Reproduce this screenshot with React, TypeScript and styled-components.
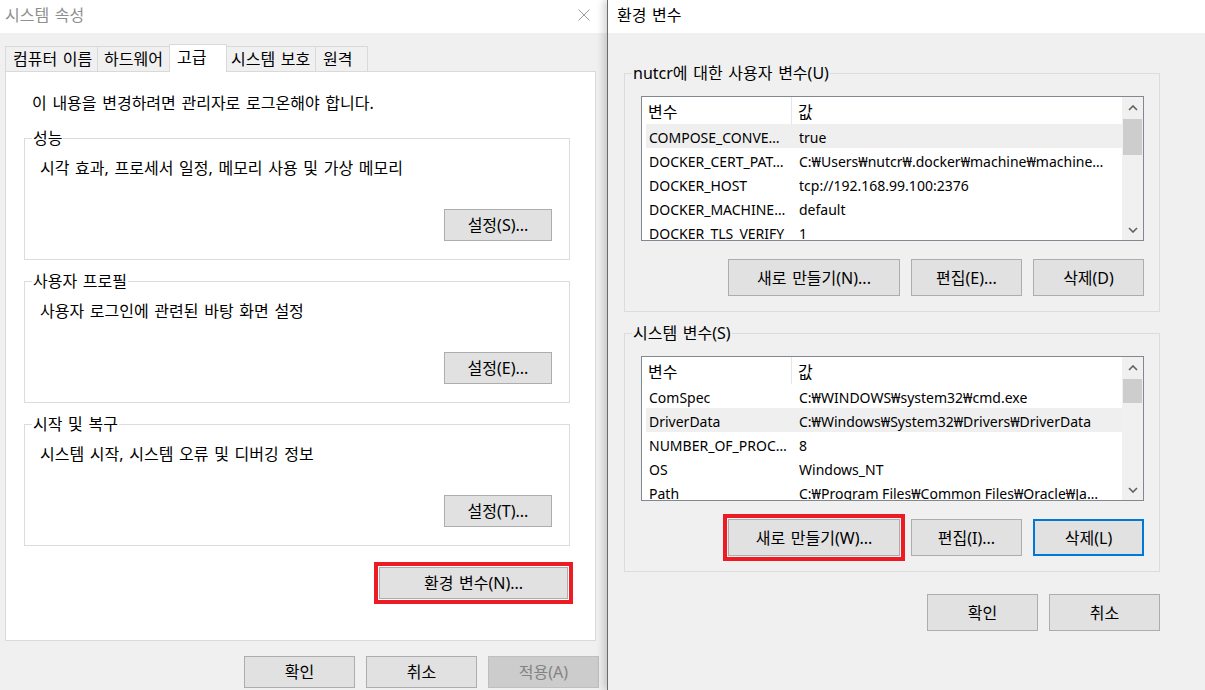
import React from "react";
import styled, { createGlobalStyle, css } from "styled-components";

const GlobalStyle = createGlobalStyle`
  html, body { margin: 0; padding: 0; background: #f0f0f0; }
  body {
    font-family: "Noto Sans", "Noto Sans CJK KR", sans-serif;
    font-size: 16px;
    line-height: 20px;
    word-spacing: 1.5px;
    color: #000;
  }
  *, *::before, *::after { box-sizing: border-box; }
`;

const Screen = styled.div`
  display: flex;
  width: 1205px;
  height: 690px;
  overflow: hidden;
`;

const LeftWindow = styled.section`
  width: 607px;
  flex: none;
  display: flex;
  flex-direction: column;
  background: #f0f0f0;
`;

const RightWindow = styled.section`
  flex: 1;
  min-width: 0;
  display: flex;
  flex-direction: column;
  background: #f0f0f0;
  border-left: 1px solid #6b6b6b;
  box-shadow: -4px 0 7px rgba(0, 0, 0, 0.16);
  position: relative;
  z-index: 1;
`;

const TitleBar = styled.header<{ $pad: number }>`
  height: 33px;
  flex: none;
  background: #fff;
  display: flex;
  align-items: center;
  justify-content: space-between;
  padding-left: ${(p) => p.$pad}px;
`;

const Title = styled.h1<{ $inactive?: boolean }>`
  margin: 0 0 3px;
  font-size: 16px;
  font-weight: 400;
  line-height: 20px;
  color: ${(p) => (p.$inactive ? "#8f8f8f" : "#000")};
`;

const CloseButton = styled.div`
  width: 46px;
  height: 33px;
  display: flex;
  align-items: center;
  justify-content: center;
  padding-bottom: 3px;
`;

const LeftBody = styled.div`
  flex: 1;
  display: flex;
  flex-direction: column;
  padding: 11px 8px 0 5px;
`;

const TabRow = styled.div`
  display: flex;
  align-items: flex-end;
  height: 28px;
  margin: 0 3px -1px 0;
  position: relative;
  z-index: 1;
`;

const Tab = styled.div<{ $w: number; $pl: number; $active?: boolean }>`
  width: ${(p) => p.$w}px;
  height: 26px;
  margin-left: -1px;
  &:first-child { margin-left: 0; }
  border: 1px solid #d9d9d9;
  background: #f0f0f0;
  padding-left: ${(p) => p.$pl}px;
  display: flex;
  align-items: center;
  white-space: nowrap;
  ${(p) =>
    p.$active &&
    css`
      height: 28px;
      background: #fff;
      border-bottom: none;
      padding-bottom: 3px;
      position: relative;
      z-index: 1;
    `}
`;

const Panel = styled.div`
  height: 570px;
  flex: none;
  margin-right: 3px;
  background: #fff;
  border: 1px solid #d9d9d9;
  display: flex;
  flex-direction: column;
  padding: 21px 25px 0 18px;
`;

const Notice = styled.p`
  margin: 0 0 0 8px;
`;

const GroupBox = styled.fieldset<{ $mt: number; $w?: number }>`
  margin: ${(p) => p.$mt}px 0 0;
  padding: 10px 17px 18px 15px;
  border: 1px solid #dcdcdc;
  min-width: 0;
  ${(p) => p.$w && css`width: ${p.$w}px;`}
`;

const EnvGroupBox = styled(GroupBox)`
  padding: 13px 15px 15px 16px;
`;

const Legend = styled.legend<{ $ml: number }>`
  padding: 0 1px;
  margin-left: ${(p) => p.$ml}px;
  line-height: 20px;
`;

const GroupText = styled.p`
  margin: 0;
`;

const ActionRow = styled.div<{ $mt: number; $pr?: number; $gap?: number }>`
  display: flex;
  justify-content: flex-end;
  margin-top: ${(p) => p.$mt}px;
  padding-right: ${(p) => p.$pr ?? 0}px;
  gap: ${(p) => p.$gap ?? 11}px;
`;

const Button = styled.button<{
  $w: number;
  $h: number;
  $disabled?: boolean;
  $marked?: boolean;
  $focused?: boolean;
}>`
  width: ${(p) => p.$w}px;
  height: ${(p) => p.$h}px;
  flex: none;
  background: #e1e1e1;
  border: 1px solid #adadad;
  font-family: inherit;
  font-size: 16px;
  line-height: 20px;
  word-spacing: 1.5px;
  color: #000;
  padding: 0;
  ${(p) =>
    p.$disabled &&
    css`
      background: #cccccc;
      border-color: #bfbfbf;
      color: #838383;
    `}
  ${(p) =>
    p.$marked &&
    css`
      outline: 4px solid #ed1c24;
      outline-offset: 1px;
    `}
  ${(p) =>
    p.$focused &&
    css`
      border: 2px solid #0078d7;
    `}
`;

const RightBody = styled.div`
  flex: 1;
  display: flex;
  flex-direction: column;
  padding: 30px 0 0 16px;
`;

const ListView = styled.div`
  height: 145px;
  border: 1px solid #828790;
  background: #fff;
  display: flex;
  overflow: hidden;
`;

const ListBody = styled.div`
  flex: 1;
  min-width: 0;
  display: flex;
  flex-direction: column;
  overflow: hidden;
`;

const HeaderRow = styled.div`
  display: flex;
  height: 27px;
  flex: none;
  padding-top: 2px;
`;

const HeaderCell = styled.div<{ $w?: number }>`
  ${(p) =>
    p.$w
      ? css`
          width: ${p.$w}px;
          border-right: 1px solid #e5e5e5;
          margin-top: -2px;
          padding-top: 2px;
        `
      : css`
          flex: 1;
        `}
  padding-left: 6px;
  display: flex;
  align-items: center;
`;

const Row = styled.div<{ $hl?: boolean }>`
  display: flex;
  align-items: center;
  height: 24px;
  flex: none;
  margin-left: 4px;
  padding-top: 3px;
  font-size: 14px;
  word-spacing: 0;
  background: ${(p) => (p.$hl ? "#efefef" : "transparent")};
`;

const NameCell = styled.div`
  width: 153px;
  flex: none;
  padding-left: 3px;
  white-space: nowrap;
  overflow: hidden;
`;

const ValueCell = styled.div`
  flex: 1;
  min-width: 0;
  white-space: nowrap;
  overflow: hidden;
`;

const ScrollBar = styled.div`
  width: 21px;
  flex: none;
  background: #f0f0f0;
  display: flex;
  flex-direction: column;
`;

const ScrollArrow = styled.div`
  height: 21px;
  flex: none;
  display: flex;
  align-items: center;
  justify-content: center;
`;

const ScrollTrack = styled.div`
  flex: 1;
  display: flex;
  flex-direction: column;
`;

const ScrollThumb = styled.div<{ $h: number }>`
  height: ${(p) => p.$h}px;
  margin: 1px 1px 0 1px;
  background: #cdcdcd;
`;

const BottomRow = styled.div<{ $mt: number; $w?: number }>`
  display: flex;
  justify-content: flex-end;
  gap: 11px;
  margin-top: ${(p) => p.$mt}px;
  ${(p) => p.$w && css`width: ${p.$w}px;`}
`;

const Chevron = ({ down }: { down?: boolean }) => (
  <svg width="10" height="6" viewBox="0 0 10 6">
    <path
      d={down ? "M1 1 L5 5 L9 1" : "M1 5 L5 1 L9 5"}
      fill="none"
      stroke="#606060"
      strokeWidth="1.6"
    />
  </svg>
);

const CloseIcon = () => (
  <svg width="12" height="12" viewBox="0 0 12 12">
    <path d="M0.5 0.5 L11.5 11.5 M11.5 0.5 L0.5 11.5" stroke="#9b9b9b" strokeWidth="1" />
  </svg>
);

type Var = { name: string; value: string; hl?: boolean };

const VarList = ({ rows, thumb }: { rows: Var[]; thumb: number }) => (
  <ListView>
    <ListBody>
      <HeaderRow>
        <HeaderCell $w={150}>변수</HeaderCell>
        <HeaderCell>값</HeaderCell>
      </HeaderRow>
      {rows.map((r) => (
        <Row key={r.name} $hl={r.hl}>
          <NameCell>{r.name}</NameCell>
          <ValueCell>{r.value}</ValueCell>
        </Row>
      ))}
    </ListBody>
    <ScrollBar>
      <ScrollArrow>
        <Chevron />
      </ScrollArrow>
      <ScrollTrack>
        <ScrollThumb $h={thumb} />
      </ScrollTrack>
      <ScrollArrow>
        <Chevron down />
      </ScrollArrow>
    </ScrollBar>
  </ListView>
);

const userVars: Var[] = [
  { name: "COMPOSE_CONVE…", value: "true", hl: true },
  { name: "DOCKER_CERT_PAT…", value: "C:₩Users₩nutcr₩.docker₩machine₩machine…" },
  { name: "DOCKER_HOST", value: "tcp://192.168.99.100:2376" },
  { name: "DOCKER_MACHINE…", value: "default" },
  { name: "DOCKER_TLS_VERIFY", value: "1" },
];

const sysVars: Var[] = [
  { name: "ComSpec", value: "C:₩WINDOWS₩system32₩cmd.exe" },
  { name: "DriverData", value: "C:₩Windows₩System32₩Drivers₩DriverData", hl: true },
  { name: "NUMBER_OF_PROC…", value: "8" },
  { name: "OS", value: "Windows_NT" },
  { name: "Path", value: "C:₩Program Files₩Common Files₩Oracle₩Ja…" },
];

const tabs = [
  { label: "컴퓨터 이름", w: 93, pl: 7 },
  { label: "하드웨어", w: 73, pl: 6 },
  { label: "고급", w: 58, pl: 7, active: true },
  { label: "시스템 보호", w: 90, pl: 4 },
  { label: "원격", w: 53, pl: 7 },
];

const groups = [
  { title: "성능", text: "시각 효과, 프로세서 일정, 메모리 사용 및 가상 메모리", btn: "설정(S)...", mt: 15 },
  { title: "사용자 프로필", text: "사용자 로그인에 관련된 바탕 화면 설정", btn: "설정(E)...", mt: 11 },
  { title: "시작 및 복구", text: "시스템 시작, 시스템 오류 및 디버깅 정보", btn: "설정(T)...", mt: 11 },
];

export default function App() {
  return (
    <>
      <GlobalStyle />
      <Screen>
        <LeftWindow>
          <TitleBar $pad={5}>
            <Title $inactive>시스템 속성</Title>
            <CloseButton>
              <CloseIcon />
            </CloseButton>
          </TitleBar>
          <LeftBody>
            <TabRow>
              {tabs.map((t) => (
                <Tab key={t.label} $w={t.w} $pl={t.pl} $active={t.active}>
                  {t.label}
                </Tab>
              ))}
            </TabRow>
            <Panel>
              <Notice>이 내용을 변경하려면 관리자로 로그온해야 합니다.</Notice>
              {groups.map((g) => (
                <GroupBox key={g.title} $mt={g.mt}>
                  <Legend $ml={-8}>{g.title}</Legend>
                  <GroupText>{g.text}</GroupText>
                  <ActionRow $mt={31}>
                    <Button $w={108} $h={32}>
                      {g.btn}
                    </Button>
                  </ActionRow>
                </GroupBox>
              ))}
              <ActionRow $mt={21} $pr={2}>
                <Button $w={189} $h={32} $marked>
                  환경 변수(N)...
                </Button>
              </ActionRow>
            </Panel>
            <BottomRow $mt={15}>
              <Button $w={111} $h={32}>확인</Button>
              <Button $w={111} $h={32}>취소</Button>
              <Button $w={111} $h={32} $disabled>적용(A)</Button>
            </BottomRow>
          </LeftBody>
        </LeftWindow>

        <RightWindow>
          <TitleBar $pad={9}>
            <Title>환경 변수</Title>
          </TitleBar>
          <RightBody>
            <EnvGroupBox $mt={0} $w={536}>
              <Legend $ml={-9}>nutcr에 대한 사용자 변수(U)</Legend>
              <VarList rows={userVars} thumb={36} />
              <ActionRow $mt={18}>
                <Button $w={172} $h={37}>새로 만들기(N)...</Button>
                <Button $w={111} $h={37}>편집(E)...</Button>
                <Button $w={111} $h={37}>삭제(D)</Button>
              </ActionRow>
            </EnvGroupBox>
            <EnvGroupBox $mt={11} $w={536}>
              <Legend $ml={-9}>시스템 변수(S)</Legend>
              <VarList rows={sysVars} thumb={24} />
              <ActionRow $mt={18}>
                <Button $w={172} $h={37} $marked>새로 만들기(W)...</Button>
                <Button $w={111} $h={37}>편집(I)...</Button>
                <Button $w={111} $h={37} $focused>삭제(L)</Button>
              </ActionRow>
            </EnvGroupBox>
            <BottomRow $mt={22} $w={536}>
              <Button $w={111} $h={37}>확인</Button>
              <Button $w={111} $h={37}>취소</Button>
            </BottomRow>
          </RightBody>
        </RightWindow>
      </Screen>
    </>
  );
}
